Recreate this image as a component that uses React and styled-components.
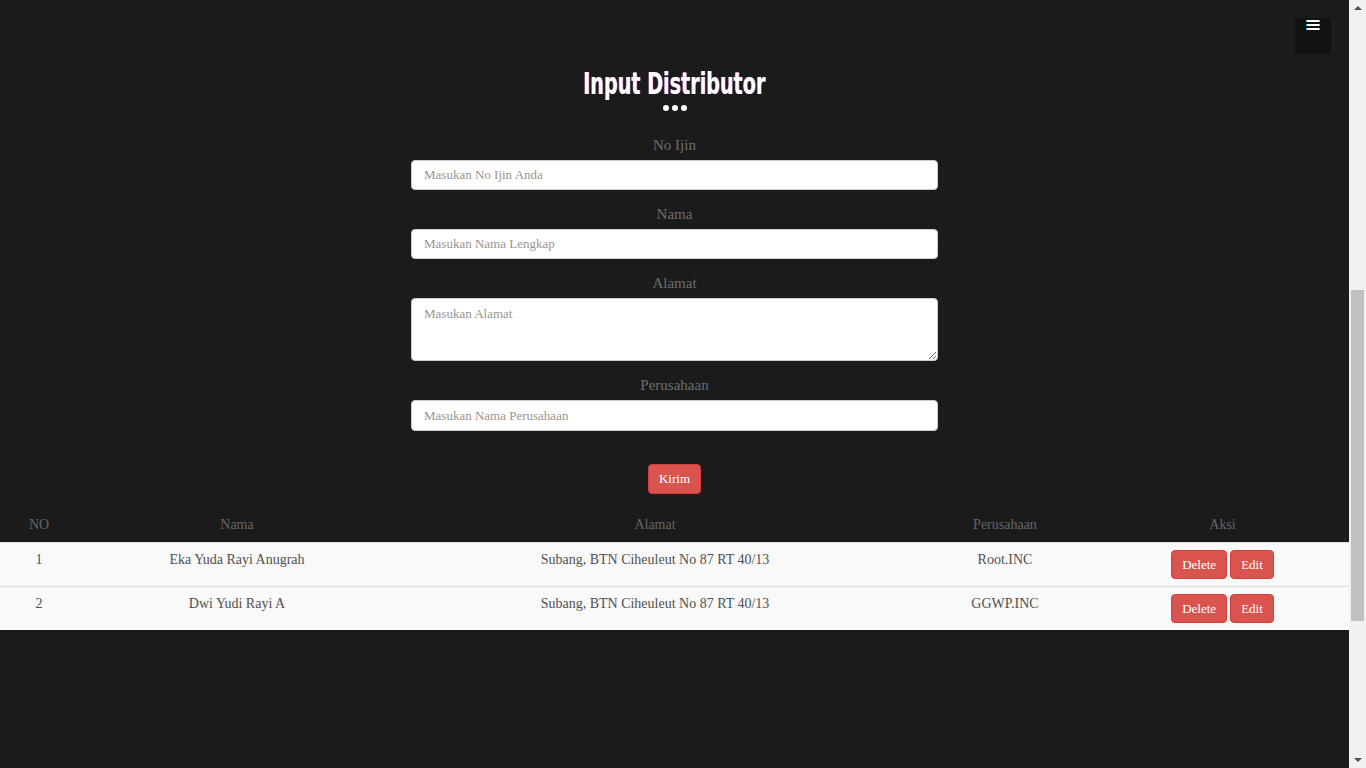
import React from "react";
import styled, { createGlobalStyle } from "styled-components";

const GlobalStyle = createGlobalStyle`
  body {
    margin: 0;
    background: #1b1b1b;
    font-family: "Liberation Serif", "DejaVu Serif", serif;
  }
`;

const Page = styled.div`
  min-height: 768px;
  margin-right: 17px;
  padding-top: 65px;
  box-sizing: border-box;
`;

/* browser scrollbar as seen in the capture */
const ScrollTrack = styled.div`
  position: fixed;
  top: 0;
  right: 0;
  width: 17px;
  height: 100vh;
  background: #f1f1f1;
`;

const ScrollThumb = styled.div`
  position: absolute;
  left: 2px;
  top: 290px;
  width: 13px;
  height: 331px;
  background: #c1c1c1;
`;

const ScrollArrow = styled.div`
  position: absolute;
  left: 5px;
  ${(p) => (p.$down ? "bottom: 6px;" : "top: 6px;")}
  width: 0;
  height: 0;
  border-left: 4px solid transparent;
  border-right: 4px solid transparent;
  ${(p) =>
    p.$down ? "border-top: 4px solid #505050;" : "border-bottom: 4px solid #505050;"}
`;

const MenuButton = styled.div`
  position: fixed;
  top: 18px;
  right: 35px;
  width: 36px;
  height: 36px;
  background: #121212;
  display: flex;
  justify-content: center;
  padding-top: 2px;
  box-sizing: border-box;
`;

const TitleWrap = styled.h1`
  margin: 0;
  text-align: center;
  line-height: 36px;
`;

const Title = styled.span`
  display: inline-block;
  transform: scaleX(0.71);
  font-family: "DejaVu Sans Condensed", "Liberation Sans", sans-serif;
  font-weight: 700;
  font-size: 30px;
  color: #fff;
  text-shadow: -1px 0 rgba(232, 60, 20, 0.85), 1px 0 rgba(20, 80, 255, 0.85);
`;

const Dots = styled.div`
  display: flex;
  justify-content: center;
  gap: 3px;
  margin-top: 3px;
`;

const Dot = styled.span`
  width: 6px;
  height: 6px;
  border-radius: 50%;
  background: #fff;
`;

const Form = styled.form`
  width: 527px;
  margin: 23px auto 0;
  display: flex;
  flex-direction: column;
  gap: 13px;
`;

const Field = styled.div`
  display: flex;
  flex-direction: column;
`;

const Label = styled.label`
  text-align: center;
  color: #6e6e6e;
  font-size: 15px;
  line-height: 22px;
  margin-bottom: 4px;
`;

const fieldCss = `
  box-sizing: border-box;
  width: 100%;
  border: 1px solid #ccc;
  border-radius: 4px;
  background: #fff;
  font-family: "Liberation Serif", "DejaVu Serif", serif;
  font-size: 13px;
  color: #555;
  padding: 0 12px;
  outline: none;
  &::placeholder {
    color: #9a948f;
  }
`;

const Input = styled.input`
  ${fieldCss}
  height: ${(p) => p.$h || 30}px;
`;

const TextArea = styled.textarea`
  ${fieldCss}
  height: 63px;
  padding-top: 7px;
  resize: vertical;
`;

const SubmitRow = styled.div`
  display: flex;
  justify-content: center;
  margin-top: 33px;
`;

const RedButton = styled.button`
  height: ${(p) => p.$h || 30}px;
  padding: 0 10px;
  background: #d9534f;
  border: 1px solid #d43f3a;
  border-radius: 4px;
  color: #fff;
  font-family: "Liberation Serif", "DejaVu Serif", serif;
  font-size: 13px;
  cursor: pointer;
`;

const Table = styled.table`
  width: 100%;
  margin-top: 14px;
  border-collapse: collapse;
  table-layout: fixed;
`;

const Th = styled.th`
  box-sizing: border-box;
  width: ${(p) => (p.$w ? `${p.$w}px` : "auto")};
  font-weight: 400;
  font-size: 14px;
  line-height: 20px;
  color: #666;
  padding: 7px 8px;
  text-align: center;
  border-bottom: 1px solid #ddd;
`;

const Tr = styled.tr`
  background: #f9f9f9;
  & + & td {
    border-top: 1px solid #ddd;
  }
`;

const Td = styled.td`
  text-align: center;
  vertical-align: top;
  padding: 7px 8px;
  font-size: 14px;
  line-height: 20px;
  color: #505050;
`;

const Actions = styled.div`
  display: flex;
  justify-content: center;
  gap: 3px;
`;

const rows = [
  {
    no: 1,
    nama: "Eka Yuda Rayi Anugrah",
    alamat: "Subang, BTN Ciheuleut No 87 RT 40/13",
    perusahaan: "Root.INC",
  },
  {
    no: 2,
    nama: "Dwi Yudi Rayi A",
    alamat: "Subang, BTN Ciheuleut No 87 RT 40/13",
    perusahaan: "GGWP.INC",
  },
];

const BarsIcon = () => (
  <svg width="14" height="10" viewBox="0 0 14 10">
    {[0, 4, 8].map((y) => (
      <g key={y}>
        <rect x="0" y={y} width="12" height="2" fill="#35b8e8" />
        <rect x="2" y={y} width="12" height="2" fill="#f0a030" />
        <rect x="1" y={y} width="12" height="2" fill="#fff" />
      </g>
    ))}
  </svg>
);

const App = () => {
  return (
    <Page>
      <GlobalStyle />
      <MenuButton>
        <BarsIcon />
      </MenuButton>
      <ScrollTrack>
        <ScrollArrow />
        <ScrollThumb />
        <ScrollArrow $down />
      </ScrollTrack>

      <TitleWrap>
        <Title>Input Distributor</Title>
      </TitleWrap>
      <Dots>
        <Dot />
        <Dot />
        <Dot />
      </Dots>

      <Form onSubmit={(e) => e.preventDefault()}>
        <Field>
          <Label>No Ijin</Label>
          <Input placeholder="Masukan No Ijin Anda" />
        </Field>
        <Field>
          <Label>Nama</Label>
          <Input placeholder="Masukan Nama Lengkap" />
        </Field>
        <Field>
          <Label>Alamat</Label>
          <TextArea placeholder="Masukan Alamat" />
        </Field>
        <Field>
          <Label>Perusahaan</Label>
          <Input $h={31} placeholder="Masukan Nama Perusahaan" />
        </Field>
      </Form>

      <SubmitRow>
        <RedButton type="submit">Kirim</RedButton>
      </SubmitRow>

      <Table>
        <thead>
          <tr>
            <Th $w={78}>NO</Th>
            <Th $w={318}>Nama</Th>
            <Th $w={518}>Alamat</Th>
            <Th $w={182}>Perusahaan</Th>
            <Th>Aksi</Th>
          </tr>
        </thead>
        <tbody>
          {rows.map((r) => (
            <Tr key={r.no}>
              <Td>{r.no}</Td>
              <Td>{r.nama}</Td>
              <Td>{r.alamat}</Td>
              <Td>{r.perusahaan}</Td>
              <Td>
                <Actions>
                  <RedButton $h={29}>Delete</RedButton>
                  <RedButton $h={29}>Edit</RedButton>
                </Actions>
              </Td>
            </Tr>
          ))}
        </tbody>
      </Table>
    </Page>
  );
};

export default App;
